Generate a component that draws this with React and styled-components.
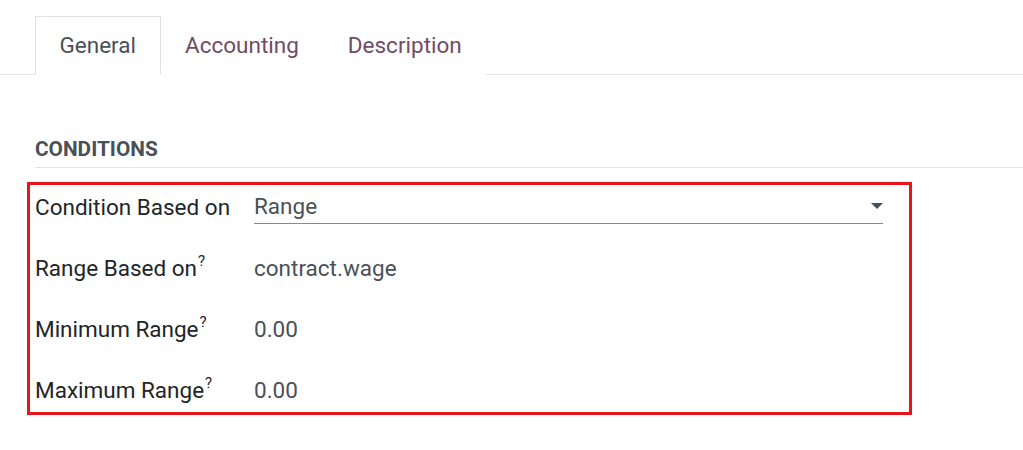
import React from "react";
import styled, { createGlobalStyle } from "styled-components";

const GlobalStyle = createGlobalStyle`
  body {
    margin: 0;
    background: #fff;
    font-family: Roboto, "Noto Sans", sans-serif;
  }
`;

const Page = styled.div`
  width: 1023px;
  height: 450px;
  overflow: hidden;
  background: #fff;
`;

const TabBar = styled.ul`
  display: flex;
  margin: 16px 0 0 0;
  padding: 0 0 0 35px;
  list-style: none;
  border-bottom: 1px solid #dee2e6;
`;

const Tab = styled.li`
  height: 59px;
  box-sizing: border-box;
  display: flex;
  align-items: center;
  padding: 0 23.5px 2px;
  margin-bottom: -1px;
  font-size: 22.5px;
  color: ${(p) => (p.active ? "#495057" : "#714b67")};
  border: 1px solid ${(p) => (p.active ? "#dee2e6" : "transparent")};
  border-bottom-color: ${(p) => (p.active ? "#fff" : "transparent")};
  background: #fff;
`;

const Section = styled.section`
  padding: 61px 0 0 35px;
`;

const Heading = styled.h2`
  margin: 0;
  padding-bottom: 5px;
  font-size: 20.8px;
  font-weight: 700;
  line-height: 26px;
  color: #495057;
  border-bottom: 1px solid #e4e6e8;
`;

const Highlight = styled.div`
  margin: 14px 0 0 -8px;
  width: 885px;
  box-sizing: border-box;
  border: 3px solid #e8141c;
  padding: 2px 26px 2px 5px;
  display: grid;
  row-gap: 21px;
`;

const Row = styled.div`
  display: grid;
  grid-template-columns: 219px 1fr;
  align-items: center;
  height: 40px;
`;

const Label = styled.div`
  font-size: 22.5px;
  color: #212529;
  white-space: nowrap;

  sup {
    font-size: 15px;
    margin-left: 1px;
    vertical-align: 10px;
    line-height: 0;
  }
`;

const Value = styled.div`
  font-size: 22.5px;
  color: #495057;
`;

const Select = styled.div`
  display: flex;
  align-items: center;
  justify-content: space-between;
  height: 34px;
  padding-bottom: 1px;
  box-sizing: border-box;
  border-bottom: 1px solid #4fa3a6;
  font-size: 22.5px;
  color: #495057;
`;

const Caret = styled.span`
  width: 0;
  height: 0;
  border-left: 6px solid transparent;
  border-right: 6px solid transparent;
  border-top: 6px solid #495057;
`;

const fields = [
  { label: "Range Based on", value: "contract.wage" },
  { label: "Minimum Range", value: "0.00" },
  { label: "Maximum Range", value: "0.00" },
];

export default function App() {
  return (
    <Page>
      <GlobalStyle />
      <TabBar>
        <Tab active>General</Tab>
        <Tab>Accounting</Tab>
        <Tab>Description</Tab>
      </TabBar>
      <Section>
        <Heading>CONDITIONS</Heading>
        <Highlight>
          <Row>
            <Label>Condition Based on</Label>
            <Select>
              <span>Range</span>
              <Caret />
            </Select>
          </Row>
          {fields.map((f) => (
            <Row key={f.label}>
              <Label>
                {f.label}
                <sup>?</sup>
              </Label>
              <Value>{f.value}</Value>
            </Row>
          ))}
        </Highlight>
      </Section>
    </Page>
  );
}
